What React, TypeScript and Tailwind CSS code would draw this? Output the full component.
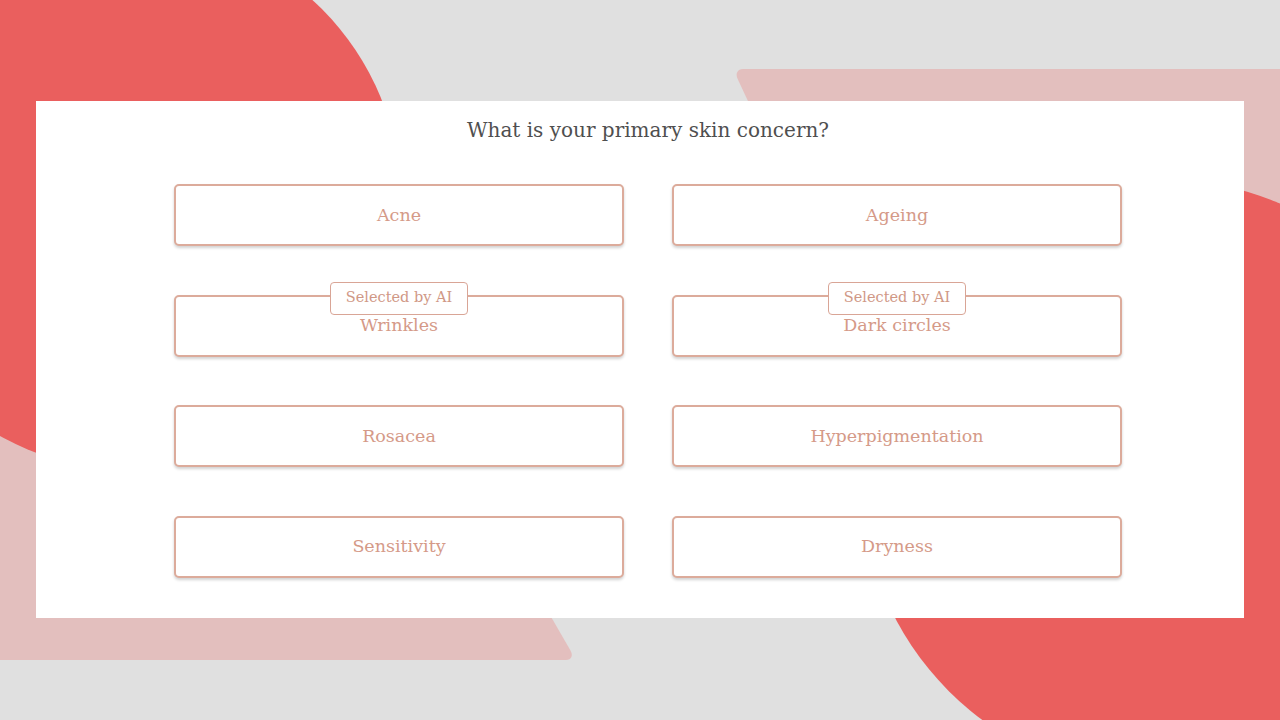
import React from "react";

const concerns = [
  { label: "Acne" },
  { label: "Ageing" },
  { label: "Wrinkles", ai: true },
  { label: "Dark circles", ai: true },
  { label: "Rosacea" },
  { label: "Hyperpigmentation" },
  { label: "Sensitivity" },
  { label: "Dryness" },
];

function ConcernButton({ label, ai }: { label: string; ai?: boolean }) {
  return (
    <div className="relative">
      <button className="flex h-[62px] w-full items-center justify-center rounded-[5px] border-2 border-[#dcab9b] bg-white text-[17.5px] text-[#d59a88] shadow-[0_2px_3px_rgba(0,0,0,0.18)]">
        {label}
      </button>
      {ai && (
        <span className="absolute left-1/2 top-[-13px] flex h-[33px] w-[138px] -translate-x-1/2 items-center justify-center rounded-[4px] border-[1.5px] border-[#d9a596] bg-white text-[14.5px] text-[#d09886]">
          Selected by AI
        </span>
      )}
    </div>
  );
}

export default function App() {
  return (
    <div className="relative h-[720px] w-[1280px] overflow-hidden bg-[#e0e0e0] font-['DejaVu_Serif',serif]">
      {/* background shapes */}
      <div className="absolute left-[-200px] top-[300px] h-[360px] w-[776px] origin-bottom skew-x-[30deg] rounded-br-[10px] bg-[#e3bfbe]" />
      <div className="absolute left-[733px] top-[69px] h-[400px] w-[800px] origin-top-left skew-x-[25deg] rounded-tl-[10px] bg-[#e3bfbe]" />
      <div className="absolute left-[-139px] top-[-70px] h-[540px] w-[540px] rounded-full bg-[#ea5f5e]" />
      <div className="absolute left-[861px] top-[179px] h-[600px] w-[600px] rounded-full bg-[#ea5f5e]" />

      <div className="relative mx-[36px] mt-[101px] h-[517px] bg-white pl-[138px] pr-[122px]">
        <h1 className="pt-[15px] text-center text-[20px] leading-[28px] text-[#4f4f4f]">
          What is your primary skin concern?
        </h1>
        <div className="mt-[40px] grid grid-cols-2 gap-x-[48px] gap-y-[48.5px]">
          {concerns.map((c) => (
            <ConcernButton key={c.label} label={c.label} ai={c.ai} />
          ))}
        </div>
      </div>
    </div>
  );
}
